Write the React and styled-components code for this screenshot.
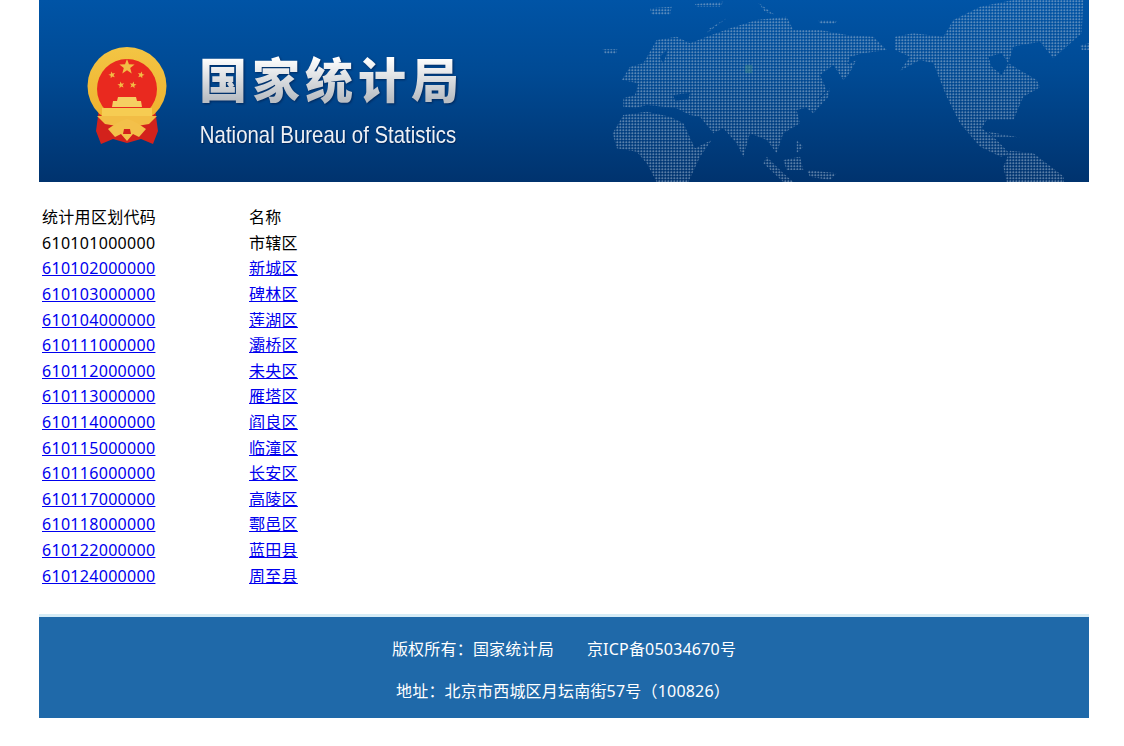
import React from "react";
import styled, {createGlobalStyle} from "styled-components";

const rows = [
    ["610101000000", "市辖区", false],
    ["610102000000", "新城区", true],
    ["610103000000", "碑林区", true],
    ["610104000000", "莲湖区", true],
    ["610111000000", "灞桥区", true],
    ["610112000000", "未央区", true],
    ["610113000000", "雁塔区", true],
    ["610114000000", "阎良区", true],
    ["610115000000", "临潼区", true],
    ["610116000000", "长安区", true],
    ["610117000000", "高陵区", true],
    ["610118000000", "鄠邑区", true],
    ["610122000000", "蓝田县", true],
    ["610124000000", "周至县", true],
];

const star = (cx, cy, r, rot = 0) => {
    let pts = [];
    for (let i = 0; i < 10; i++) {
        const rad = i % 2 === 0 ? r : r * 0.42;
        const a = ((-90 + rot + i * 36) * Math.PI) / 180;
        pts.push(`${(cx + rad * Math.cos(a)).toFixed(2)},${(cy + rad * Math.sin(a)).toFixed(2)}`);
    }
    return pts.join(" ");
};

const Emblem = () => (
    <EmblemSvg viewBox="0 0 80 98">
        <defs>
            <linearGradient id="ring" x1="0" y1="0" x2="0" y2="1">
                <stop offset="0" stopColor="#f3c544"/>
                <stop offset="1" stopColor="#eeb02c"/>
            </linearGradient>
        </defs>
        <path d="M12 62 L9 84 L14 97 L26 92 L40 96 L54 92 L66 97 L71 84 L68 62 Z" fill="#d3221c"/>
        <ellipse cx="40" cy="39" rx="39.5" ry="39" fill="url(#ring)"/>
        <ellipse cx="40" cy="42" rx="30" ry="30" fill="#e9291f"/>
        <polygon points={star(40, 20, 8)} fill="#f2bd45"/>
        <polygon points={star(25, 28, 3.6, -15)} fill="#f2bd45"/>
        <polygon points={star(54, 28, 3.6, 15)} fill="#f2bd45"/>
        <polygon points={star(34, 38, 3.6, -10)} fill="#f2bd45"/>
        <polygon points={star(46, 38, 3.6, 10)} fill="#f2bd45"/>
        <path d="M31 50 L49 50 L50 54 L54 54 L55 60 L25 60 L26 54 L30 54 Z" fill="#f6cf62"/>
        <rect x="15" y="61" width="50" height="8" fill="#f6cc52"/>
        <path d="M10 69 L70 69 L62 77 L50 79 L40 75 L30 79 L18 77 Z" fill="#f2bd45"/>
        <path d="M21 82 C27 78 32 74 40 72 C48 74 53 78 59 82 L52 90 L46 87 L40 94 L34 87 L28 90 Z" fill="#f3c04a"/>
        <path d="M37 82 L43 82 L44 87 L36 87 Z" fill="#d3221c"/>
    </EmblemSvg>
);

const WorldMap = () => (
    <MapSvg viewBox="0 0 1527 546">
        <defs>
            <pattern id="dots" width="9" height="9" patternUnits="userSpaceOnUse">
                <rect x="1" y="1" width="6" height="6" rx="2.4" fill="#a5bbd4" fillOpacity="0.54"/>
            </pattern>
        </defs>
        <MapLand fill="url(#dots)" fillRule="evenodd">
            {/* eurasia with the inland seas cut out */}
            <path d="M125 240 L150 200 L190 190 L230 120 L290 110 L330 130 L380 110 L450 85 L530 60 L620 50 L640 90 L720 90 L800 105 L880 110 L920 150 L850 160 L810 170 L790 240 L760 195 L720 225 L740 270 L690 320 L650 330 L660 370 L610 400 L590 460 L560 420 L510 400 L490 470 L470 430 L430 385 L400 400 L360 350 L330 345 L290 325 L250 320 L200 315 L165 325 L130 320 L130 295 L165 285 L175 250 Z M280 285 L330 278 L325 298 L285 302 Z M240 170 L265 145 L250 190 Z"/>
            {/* africa */}
            <path d="M98 400 L130 345 L200 335 L270 350 L310 370 L345 445 L395 420 L360 470 L325 546 L230 546 L200 490 L170 455 L110 445 Z"/>
            {/* north america and greenland */}
            <path d="M945 110 L1000 100 L1090 110 L1120 60 L1200 20 L1300 0 L1510 0 L1505 100 L1420 175 L1380 125 L1300 140 L1285 190 L1370 240 L1380 262 L1330 290 L1300 360 L1220 360 L1205 385 L1250 420 L1290 462 L1262 470 L1200 440 L1140 370 L1100 290 L1060 190 L1020 180 L960 212 L990 170 L945 150 Z M1225 170 L1265 160 L1285 190 L1265 225 L1235 200 Z"/>
            {/* south america */}
            <path d="M1290 452 L1360 460 L1452 530 L1452 546 L1280 546 L1270 500 Z"/>
            {/* islands */}
            <path d="M680 325 L725 290 L750 265 L745 290 L700 340 Z"/>
            <path d="M790 240 L800 195 L830 180 L805 225 Z"/>
            <path d="M560 470 L610 520 L640 546 L610 546 L550 490 Z"/>
            <path d="M610 480 L660 470 L670 510 L620 510 Z"/>
            <path d="M650 420 L670 440 L650 460 Z"/>
            <path d="M680 510 L770 520 L750 540 L690 530 Z"/>
            <path d="M68 148 L112 148 L108 162 L75 162 Z"/>
            <path d="M210 25 L275 20 L270 45 L215 45 Z"/>
            <path d="M345 12 L430 5 L420 20 L350 20 Z"/>
            <path d="M535 8 L585 45 L555 35 Z"/>
            <path d="M380 100 L440 55 L390 85 Z"/>
            <path d="M715 60 L770 62 L765 72 L720 72 Z"/>
            <path d="M1225 395 L1330 415 L1290 410 L1240 410 Z"/>
            <path d="M1500 135 L1527 130 L1527 150 L1505 150 Z"/>
        </MapLand>
        <rect x="495" y="195" width="22" height="24" fill="#4d9a7a" fillOpacity="0.3"/>
    </MapSvg>
);

const App = () => (
    <Page>
        <GlobalStyle/>
        <Banner>
            <Brand>
                <Emblem/>
                <BrandText>
                    <CnName>国家统计局</CnName>
                    <EnName>National Bureau of Statistics</EnName>
                </BrandText>
            </Brand>
            <WorldMap/>
        </Banner>
        <CodeTable>
            <tbody>
                <tr>
                    <CodeCell>统计用区划代码</CodeCell>
                    <td>名称</td>
                </tr>
                {rows.map(([code, name, linked]) => (
                    <tr key={code}>
                        <CodeCell>{linked ? <a href="#">{code}</a> : code}</CodeCell>
                        <td>{linked ? <a href="#">{name}</a> : name}</td>
                    </tr>
                ))}
            </tbody>
        </CodeTable>
        <Footer>
            <FooterLine>
                版权所有：国家统计局<Icp>京ICP备05034670号</Icp>
            </FooterLine>
            <FooterLine $shift={2}>地址：北京市西城区月坛南街57号（100826）</FooterLine>
        </Footer>
    </Page>
);

const GlobalStyle = createGlobalStyle`
    body {
        margin: 0;
        background: #fff;
        color: #000;
        font-family: "Noto Sans", "Noto Sans CJK SC", sans-serif;
        font-size: 16px;
    }
`;

const Page = styled.div`
    width: 1050px;
    margin-left: 39px;
`;

const Banner = styled.header`
    height: 182px;
    display: flex;
    justify-content: space-between;
    background: linear-gradient(180deg, #0054a6 0%, #004a94 40%, #00336e 100%);
    overflow: hidden;
`;

const Brand = styled.div`
    display: flex;
    align-items: flex-start;
    padding: 47px 0 0 48px;
    gap: 32px;
`;

const EmblemSvg = styled.svg`
    width: 80px;
    height: 98px;
    display: block;
`;

const BrandText = styled.div`
    display: flex;
    flex-direction: column;
`;

const CnName = styled.div`
    font-family: "Noto Sans CJK SC", sans-serif;
    font-weight: 900;
    font-size: 48px;
    line-height: 64px;
    margin-top: -2px;
    letter-spacing: 5px;
    white-space: nowrap;
    color: transparent;
    background: linear-gradient(180deg, #ffffff 20%, #b9bec4 85%);
    -webkit-background-clip: text;
    background-clip: text;
    filter: drop-shadow(1px 1px 1px rgba(0, 20, 60, 0.6));
`;

const EnName = styled.div`
    font-family: "Liberation Sans", Arial, sans-serif;
    font-size: 24px;
    line-height: 28px;
    margin-top: 12px;
    padding-left: 1px;
    white-space: nowrap;
    transform: scaleX(0.85);
    transform-origin: left center;
    color: #eef1f5;
    text-shadow: 1px 1px 1px rgba(0, 20, 60, 0.6);
`;

const MapSvg = styled.svg`
    width: 509px;
    height: 182px;
    display: block;
    flex: none;
`;

const MapLand = styled.g`
    filter: blur(0.25px);
`;

const CodeTable = styled.table`
    margin-top: 23.2px;
    border-collapse: collapse;
    line-height: 25.6px;
    letter-spacing: 0.3px;

    td {
        padding: 0 0 0 3px;
    }

    a {
        color: #0000ee;
    }
`;

const CodeCell = styled.td`
    width: 204px;
`;

const Footer = styled.footer`
    margin-top: 24.8px;
    border-top: 3px solid #d6ecf6;
    background: #1f69a9;
    color: #fff;
    display: flex;
    flex-direction: column;
    align-items: center;
    padding-top: 19px;
    gap: 16px;
    height: 82px;
    letter-spacing: 0.2px;
`;

const FooterLine = styled.div`
    line-height: 26px;
    padding-right: ${props => props.$shift || 0}px;
`;

const Icp = styled.span`
    margin-left: 33px;
`;

export default App;
